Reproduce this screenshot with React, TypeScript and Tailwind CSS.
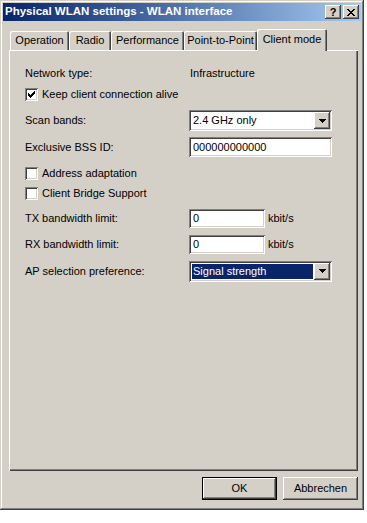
import React from "react";

const raised =
  "shadow-[inset_-1px_-1px_#404040,inset_1px_1px_#ffffff,inset_-2px_-2px_#808080,inset_2px_2px_#d4d0c8]";
const sunken =
  "shadow-[inset_1px_1px_#808080,inset_-1px_-1px_#ffffff,inset_2px_2px_#404040,inset_-2px_-2px_#d4d0c8]";

const Checkbox: React.FC<{ checked?: boolean; label: string }> = ({ checked, label }) => (
  <div className="flex items-center gap-[4px]">
    <div className={`w-[13px] h-[13px] bg-white ${sunken} flex items-center justify-center`}>
      {checked && (
        <svg width="7" height="7" viewBox="0 0 7 7" shapeRendering="crispEdges">
          <path d="M0 2h1v1h1v1h1v-1h1v-1h1v-1h1v-1h1v3h-1v1h-1v1h-1v1h-1v1h-1v-1h-1v-1h-1z" fill="#000" />
        </svg>
      )}
    </div>
    <span>{label}</span>
  </div>
);

const Arrow = () => (
  <svg width="7" height="4" viewBox="0 0 7 4" shapeRendering="crispEdges">
    <path d="M0 0h7v1h-1v1h-1v1h-1v1h-1v-1h-1v-1h-1v-1h-1z" fill="#000" />
  </svg>
);

const Select: React.FC<{ value: string; selected?: boolean }> = ({ value, selected }) => (
  <div className={`w-[143px] h-[21px] bg-white ${sunken} p-[2px] flex`}>
    <div className="flex-1 flex items-center p-[1px] min-w-0">
      <div
        className={`h-full flex-1 flex items-center pl-[1px] ${
          selected ? "bg-[#0a246a] text-white" : ""
        }`}
      >
        {value}
      </div>
    </div>
    <div className={`w-[16px] h-[17px] bg-[#d4d0c8] ${raised} flex items-center justify-center`}>
      <Arrow />
    </div>
  </div>
);

const Input: React.FC<{ value: string; w: string; h: string }> = ({ value, w, h }) => (
  <div className={`${w} ${h} bg-white ${sunken} flex items-center pl-[4px]`}>{value}</div>
);

const Row: React.FC<{ label: string; className: string; children: React.ReactNode }> = ({
  label,
  className,
  children,
}) => (
  <div className={`flex items-center ${className}`}>
    <div className="w-[164px] shrink-0">{label}</div>
    {children}
  </div>
);

const tabs = [
  { label: "Operation", w: "w-[59px]" },
  { label: "Radio", w: "w-[42px]" },
  { label: "Performance", w: "w-[73px]" },
  { label: "Point-to-Point", w: "w-[73px]" },
];

export default function App() {
  return (
    <div className="w-[367px] h-[523px] bg-white text-[11px] text-black font-['Liberation_Sans',Arial,sans-serif] leading-none">
      <div className="w-[364px] h-[510px] bg-[#d4d0c8] flex flex-col shadow-[inset_-1px_-1px_#404040,inset_1px_1px_#d4d0c8,inset_-2px_-2px_#808080,inset_2px_2px_#ffffff]">
        {/* title bar */}
        <div className="mx-[3px] mt-[3px] h-[18px] bg-gradient-to-r from-[#0a246a] to-[#a6caf0] flex items-center pl-[2px] pr-[2px]">
          <span className="flex-1 text-white font-bold text-[11.5px]">
            Physical WLAN settings - WLAN interface
          </span>
          <div className={`w-[16px] h-[14px] bg-[#d4d0c8] ${raised} flex items-center justify-center font-bold text-[11px] pt-[1px]`}>
            ?
          </div>
          <div className={`ml-[2px] w-[16px] h-[14px] bg-[#d4d0c8] ${raised} flex items-center justify-center`}>
            <svg width="8" height="7" viewBox="0 0 8 7" shapeRendering="crispEdges">
              <path d="M0 0h2v1h1v1h2v-1h1v-1h2v1h-1v1h-1v1h-1v1h1v1h1v1h1v1h-2v-1h-1v-1h-2v1h-1v1h-2v-1h1v-1h1v-1h1v-1h-1v-1h-1v-1h-1z" fill="#000" />
            </svg>
          </div>
        </div>

        {/* tabs */}
        <div className="mt-[8px] h-[21px] pl-[10px] flex items-end relative z-10">
          {tabs.map((t) => (
            <div
              key={t.label}
              className={`${t.w} h-[19px] flex items-center justify-center rounded-tl-[2px] rounded-tr-[2px] shadow-[inset_1px_1px_#ffffff,inset_-1px_0_#404040,inset_-2px_0_#808080]`}
            >
              {t.label}
            </div>
          ))}
          <div className="w-[70px] h-[22px] -mb-[1px] bg-[#d4d0c8] flex items-center justify-center pb-[2px] rounded-tl-[2px] rounded-tr-[2px] shadow-[inset_1px_1px_#ffffff,inset_-1px_0_#404040,inset_-2px_0_#808080]">
            Client mode
          </div>
        </div>

        {/* panel */}
        <div className="ml-[9px] mr-[6px] h-[421px] pt-[14px] pl-[16px] flex flex-col shadow-[inset_1px_1px_#ffffff,inset_-1px_-1px_#404040,inset_-2px_-2px_#808080]">
          <Row label="Network type:" className="h-[18px]">
            <span className="ml-[1px]">Infrastructure</span>
          </Row>
          <div className="mt-[3px] h-[18px] flex items-center">
            <Checkbox checked label="Keep client connection alive" />
          </div>
          <Row label="Scan bands:" className="mt-[7px] h-[21px]">
            <Select value="2.4 GHz only" />
          </Row>
          <Row label="Exclusive BSS ID:" className="mt-[6px] h-[20px]">
            <Input value="000000000000" w="w-[143px]" h="h-[20px]" />
          </Row>
          <div className="mt-[7px] h-[18px] flex items-center">
            <Checkbox label="Address adaptation" />
          </div>
          <div className="mt-[2px] h-[18px] flex items-center">
            <Checkbox label="Client Bridge Support" />
          </div>
          <Row label="TX bandwidth limit:" className="mt-[7px] h-[19px]">
            <Input value="0" w="w-[76px]" h="h-[19px]" />
            <span className="ml-[3px]">kbit/s</span>
          </Row>
          <Row label="RX bandwidth limit:" className="mt-[7px] h-[19px]">
            <Input value="0" w="w-[76px]" h="h-[19px]" />
            <span className="ml-[3px]">kbit/s</span>
          </Row>
          <Row label="AP selection preference:" className="mt-[7px] h-[20px]">
            <Select value="Signal strength" selected />
          </Row>
        </div>

        {/* buttons */}
        <div className="mt-[6px] mr-[6px] flex justify-end gap-[6px]">
          <div className="w-[75px] h-[23px] border border-black">
            <div className={`w-full h-full ${raised} flex items-center justify-center`}>OK</div>
          </div>
          <div className={`w-[75px] h-[23px] ${raised} flex items-center justify-center`}>Abbrechen</div>
        </div>
      </div>
    </div>
  );
}
